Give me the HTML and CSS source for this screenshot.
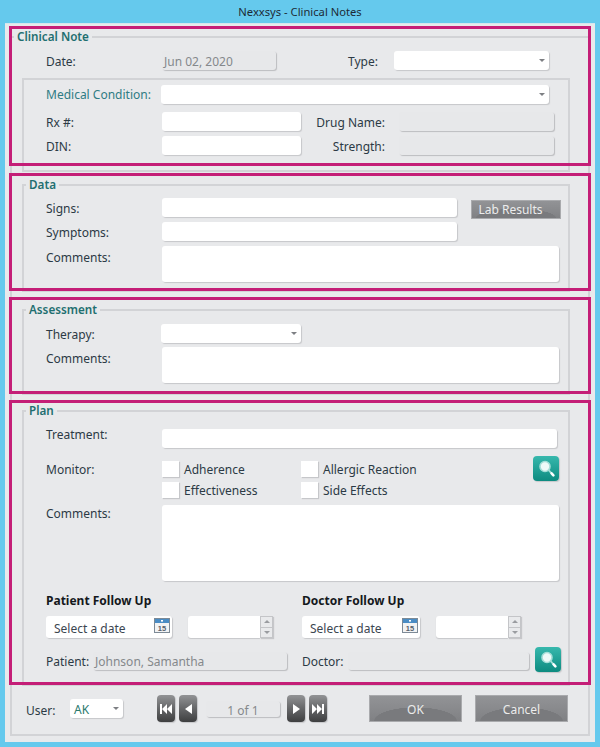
FILE: index.html
```html
<!DOCTYPE html>
<html lang="en">
<head>
<meta charset="utf-8">
<title>Nexxsys - Clinical Notes</title>
<link rel="stylesheet" href="styles.css">
</head>
<body>
<svg class="defs" width="0" height="0" aria-hidden="true">
  <symbol id="mag" viewBox="0 0 26 25">
    <circle cx="12" cy="10.5" r="5" fill="#eefaf8" stroke="#a5dfd8" stroke-width="1.6"/>
    <path d="M15.6 14.2l3 3.2" stroke="#a5dfd8" stroke-width="1.8"/>
    <path d="M18.6 17.4l1.8 1.9" stroke="#ffffff" stroke-width="2.6" stroke-linecap="round"/>
  </symbol>
</svg>
<header class="titlebar">Nexxsys - Clinical Notes</header>
<main class="panel">
  <fieldset class="outer">
    <legend>Clinical Note</legend>
    <div class="row row-date">
      <span class="label">Date:</span>
      <div class="field ro w-date">Jun 02, 2020</div>
      <span class="label label-type">Type:</span>
      <div class="field select w-type"></div>
    </div>
    <div class="group plain">
      <div class="row">
        <span class="label accent">Medical Condition:</span>
        <div class="field select w-cond"></div>
      </div>
      <div class="row mt8">
        <span class="label">Rx #:</span>
        <div class="field w-rx"></div>
        <span class="label side">Drug Name:</span>
        <div class="field ro w-drug"></div>
      </div>
      <div class="row mt5">
        <span class="label">DIN:</span>
        <div class="field w-rx"></div>
        <span class="label side">Strength:</span>
        <div class="field ro w-drug"></div>
      </div>
    </div>

    <fieldset class="group data">
      <legend>Data</legend>
      <div class="row">
        <span class="label">Signs:</span>
        <div class="field w-signs"></div>
        <button class="btn lab">Lab Results</button>
      </div>
      <div class="row mt5">
        <span class="label">Symptoms:</span>
        <div class="field w-signs"></div>
      </div>
      <div class="row top mt5">
        <span class="label pad4">Comments:</span>
        <div class="field area h36"></div>
      </div>
    </fieldset>

    <fieldset class="group assess">
      <legend>Assessment</legend>
      <div class="row">
        <span class="label">Therapy:</span>
        <div class="field select w-therapy"></div>
      </div>
      <div class="row top mt4">
        <span class="label pad4">Comments:</span>
        <div class="field area h36"></div>
      </div>
    </fieldset>

    <fieldset class="group plan">
      <legend>Plan</legend>
      <div class="row">
        <span class="label up4">Treatment:</span>
        <div class="field w-treat"></div>
      </div>
      <div class="monitor">
        <span class="label">Monitor:</span>
        <div class="checks">
          <label class="check"><i></i>Adherence</label>
          <label class="check"><i></i>Allergic Reaction</label>
          <label class="check"><i></i>Effectiveness</label>
          <label class="check"><i></i>Side Effects</label>
        </div>
        <button class="mag" aria-label="Search"><svg width="26" height="25"><use href="#mag"/></svg></button>
      </div>
      <div class="row top mt7">
        <span class="label pad1">Comments:</span>
        <div class="field area h76"></div>
      </div>
      <div class="follow">
        <div class="fcol">
          <h3>Patient Follow Up</h3>
          <div class="dates">
            <div class="field date w-pdate">Select a date<svg class="cal" width="16" height="15" viewBox="0 0 16 15"><rect x="0.5" y="0.5" width="15" height="14" fill="#f2f3f4" stroke="#7d8a96"/><rect x="1" y="1" width="14" height="4" fill="#4a8cc4"/><rect x="7" y="2" width="2" height="1.6" fill="#fff"/><text x="8" y="12.6" class="caltext">15</text></svg></div>
            <div class="time"><div class="field tinput"></div><div class="spin"><b class="s-up"></b><b class="s-down"></b></div></div>
          </div>
        </div>
        <div class="fcol">
          <h3>Doctor Follow Up</h3>
          <div class="dates">
            <div class="field date w-ddate">Select a date<svg class="cal" width="16" height="15" viewBox="0 0 16 15"><rect x="0.5" y="0.5" width="15" height="14" fill="#f2f3f4" stroke="#7d8a96"/><rect x="1" y="1" width="14" height="4" fill="#4a8cc4"/><rect x="7" y="2" width="2" height="1.6" fill="#fff"/><text x="8" y="12.6" class="caltext">15</text></svg></div>
            <div class="time"><div class="field tinput"></div><div class="spin"><b class="s-up"></b><b class="s-down"></b></div></div>
          </div>
        </div>
      </div>
      <div class="row people">
        <span class="plabel">Patient:</span>
        <div class="field ro w-patient">Johnson, Samantha</div>
        <span class="plabel dlabel">Doctor:</span>
        <div class="field ro w-doctor"></div>
        <button class="mag mag2" aria-label="Search"><svg width="26" height="25"><use href="#mag"/></svg></button>
      </div>
    </fieldset>

    <footer class="foot">
      <span class="ulabel">User:</span>
      <div class="field select w-user"><span class="uval">AK</span></div>
      <button class="nav first" aria-label="First"><svg width="12" height="10" viewBox="0 0 12 10"><path d="M0 0h2v10H0zM7 0v10L2 5zM12 0v10L7 5z" fill="#fff"/></svg></button>
      <button class="nav" aria-label="Previous"><svg width="7" height="10" viewBox="0 0 7 10"><path d="M7 0v10L0 5z" fill="#fff"/></svg></button>
      <div class="field ro pager">1 of 1</div>
      <button class="nav" aria-label="Next"><svg width="7" height="10" viewBox="0 0 7 10"><path d="M0 0v10l7-5z" fill="#fff"/></svg></button>
      <button class="nav" aria-label="Last"><svg width="12" height="10" viewBox="0 0 12 10"><path d="M0 0v10l5-5zM5 0v10l5-5zM10 0h2v10h-2z" fill="#fff"/></svg></button>
      <button class="btn wide ok">OK</button>
      <button class="btn wide">Cancel</button>
    </footer>
  </fieldset>
</main>
<div class="mark m1"></div>
<div class="mark m2"></div>
<div class="mark m3"></div>
<div class="mark m4"></div>
</body>
</html>
```

FILE: styles.css
```css
* { box-sizing: border-box; }
html, body { margin: 0; height: 747px; overflow: hidden; }
body {
  position: relative;
  width: 600px;
  background: #65c9ed;
  font: 12px/16px "Noto Sans", "Open Sans", sans-serif;
  color: #2c3a45;
}
.defs { position: absolute; }
.titlebar {
  height: 23px;
  line-height: 24px;
  font-size: 11.2px;
  text-align: center;
  color: #1d2b36;
}
.panel {
  height: 719px;
  margin: 0 5px;
  padding: 4px 5px 0;
  background: #e8e9eb;
  border-top: 1px solid #d5e6ee;
}
fieldset {
  margin: 0;
  padding: 0;
  min-width: 0;
  border: 2px solid #d2d3d6;
}
legend {
  height: 17px;
  padding: 0 3px;
  margin-left: 2px;
  font-size: 11.7px;
  font-weight: 600;
  line-height: 17px;
  color: #1f6f70;
}
.outer { height: 708px; }
.group { margin: 0 18px 0 10px; border: 2px solid #d2d3d6; }
.plain { margin-top: 8px; padding: 5px 0 15px; height: 94px; }
.data { margin-top: 4px; padding-bottom: 8px; }
.data > .row:first-of-type { margin-top: 5px; }
.assess { margin-top: 9px; padding-bottom: 10px; }
.assess > .row:first-of-type { margin-top: 6px; }
.plan { margin-top: 7px; padding-bottom: 12px; }
.plan > .row:first-of-type { margin-top: 10px; }

.row { display: flex; align-items: center; height: 19px; padding-left: 22px; }
.row.top { align-items: flex-start; height: auto; }
.row-date { margin-top: 6px; padding-left: 34px; }
.mt4 { margin-top: 4px; }
.mt5 { margin-top: 5px; }
.mt7 { margin-top: 7px; }
.mt8 { margin-top: 8px; }
.label { flex: none; width: 116px; padding-top: 3px; white-space: nowrap; }
.accent { color: #2f7c84; padding-top: 0; }
.pad4 { padding-top: 4px; }
.pad1 { padding-top: 1px; }
.up4 { margin-bottom: 8px; padding-top: 1px; }
.label-type { width: 46px; margin-left: 72px; }
.side { width: 84px; margin-right: 14px; text-align: right; }

.field {
  flex: none;
  height: 19px;
  background: #fff;
  border-radius: 3px;
  box-shadow: 1px 1px 1px #c6c7ca;
}
.ro {
  background: #e7e8ea;
  box-shadow: 1px 1px 1px #bcbdc0;
  color: #85888c;
  padding-left: 2px;
  line-height: 21px;
}
.select { display: flex; align-items: center; justify-content: flex-end; padding-right: 4px; }
.select::after {
  content: "";
  border: 3px solid transparent;
  border-top: 3px solid #7d7f83;
  border-bottom: 0;
}
.w-date { width: 114px; }
.w-type { width: 155px; }
.w-cond { width: 388px; margin-left: -1px; }
.w-rx { width: 139px; }
.w-drug { width: 155px; }
.w-signs { width: 295px; }
.w-therapy { width: 140px; margin-left: -1px; }
.w-treat { width: 395px; }
.area { width: 397px; }
.h36 { height: 36px; }
.h76 { height: 76px; }

.btn {
  padding: 0;
  border: 1px solid #a9aaad;
  color: #ececec;
  font: inherit;
  background:
    radial-gradient(ellipse 75% 90% at 50% 100%, #797a7d 0 60%, transparent 61%),
    linear-gradient(#929396, #808184);
  background-color: #797a7d;
}
.lab { flex: none; width: 90px; height: 19px; margin: 4px 0 0 14px; padding-right: 11px; }

.monitor { display: flex; height: 42px; margin-top: 8px; padding-left: 22px; }
.monitor > .label { padding-top: 6px; }
.checks {
  display: grid;
  grid-template-columns: 139px 232px;
  grid-auto-rows: 16px;
  row-gap: 5px;
  padding-top: 5px;
}
.check { display: flex; align-items: center; gap: 5px; padding-top: 2px; white-space: nowrap; }
.check i {
  width: 17px;
  height: 16px;
  margin-top: -2px;
  background: #fff;
  box-shadow: 1px 1px 1px #c6c7ca;
}
.mag {
  flex: none;
  width: 26px;
  height: 25px;
  padding: 0;
  border: 0;
  border-radius: 4px;
  background: linear-gradient(#37b8ad, #0d8b80);
  box-shadow: 1px 1px 1px #c6c7ca;
}
.mag svg { display: block; }

.follow { display: flex; margin-top: 11px; padding-left: 22px; }
.fcol { width: 256px; }
.fcol h3 { margin: 0; padding-top: 1px; font-size: 12px; line-height: 16px; font-weight: 700; color: #14181c; }
.dates { display: flex; gap: 16px; margin-top: 7px; }
.date {
  display: flex;
  align-items: center;
  justify-content: space-between;
  height: 22px;
  padding: 4px 2px 0 8px;
  color: #3c4650;
}
.cal { margin-bottom: 8px; }
.caltext { font: 700 7.5px "Liberation Sans", sans-serif; text-anchor: middle; fill: #55606a; }
.w-pdate { width: 126px; }
.w-ddate { width: 118px; }
.time { display: flex; }
.tinput { width: 72px; height: 22px; border-radius: 3px 0 0 3px; box-shadow: 0 1px 1px #c6c7ca; }
.spin { display: flex; flex-direction: column; width: 13px; height: 22px; box-shadow: 1px 1px 1px #c6c7ca; }
.spin b {
  display: flex;
  align-items: center;
  justify-content: center;
  flex: 1;
  background: #e9eaec;
  border: 1px solid #c4c5c8;
}
.spin b + b { border-top: 0; }
.spin b::after {
  content: "";
  border: 3px solid transparent;
}
.spin b.s-up::after { border-bottom-color: #9a9ca0; border-top: 0; }
.spin b.s-down::after { border-top-color: #9a9ca0; border-bottom: 0; }

.people { align-items: flex-end; height: 25px; margin-top: 9px; }
.plabel { flex: none; width: 47px; margin-bottom: 2px; }
.dlabel { width: 46px; margin-left: 15px; }
.people .field { height: 18px; line-height: 20px; margin-bottom: 2px; }
.w-patient { width: 194px; }
.w-doctor { width: 181px; }
.people .mag2 { height: 25px; margin: 0 0 0 6px; }

.foot { display: flex; align-items: center; height: 27px; margin-top: 9px; padding-left: 14px; }
.ulabel { flex: none; width: 44px; padding-top: 4px; }
.w-user { width: 53px; padding-left: 4px; justify-content: space-between; color: #2a7a6e; }
.uval { padding-top: 3px; }
.nav {
  flex: none;
  display: flex;
  align-items: center;
  justify-content: center;
  width: 18px;
  height: 27px;
  margin-left: 4px;
  padding: 0;
  border: 0;
  border-radius: 4px;
  background: linear-gradient(#929395 0, #6a6b6d 45%, #3e3f40 100%);
  box-shadow: 1px 1px 1px #c6c7ca;
}
.first { margin-left: 34px; }
.pager {
  width: 74px;
  height: 16px;
  margin: 0 7px 0 9px;
  padding: 0;
  text-align: center;
  line-height: 20px;
}
.pager + .nav { margin-left: 0; }
.wide { flex: none; width: 93px; height: 27px; margin-left: 13px; padding-top: 3px; }
.ok { margin-left: 42px; }

.mark { position: absolute; left: 9px; width: 582px; border: 3px solid #c41e77; pointer-events: none; }
.m1 { top: 26px; height: 140px; }
.m2 { top: 173px; height: 118px; }
.m3 { top: 297px; height: 97px; }
.m4 { top: 400px; height: 285px; }
```
